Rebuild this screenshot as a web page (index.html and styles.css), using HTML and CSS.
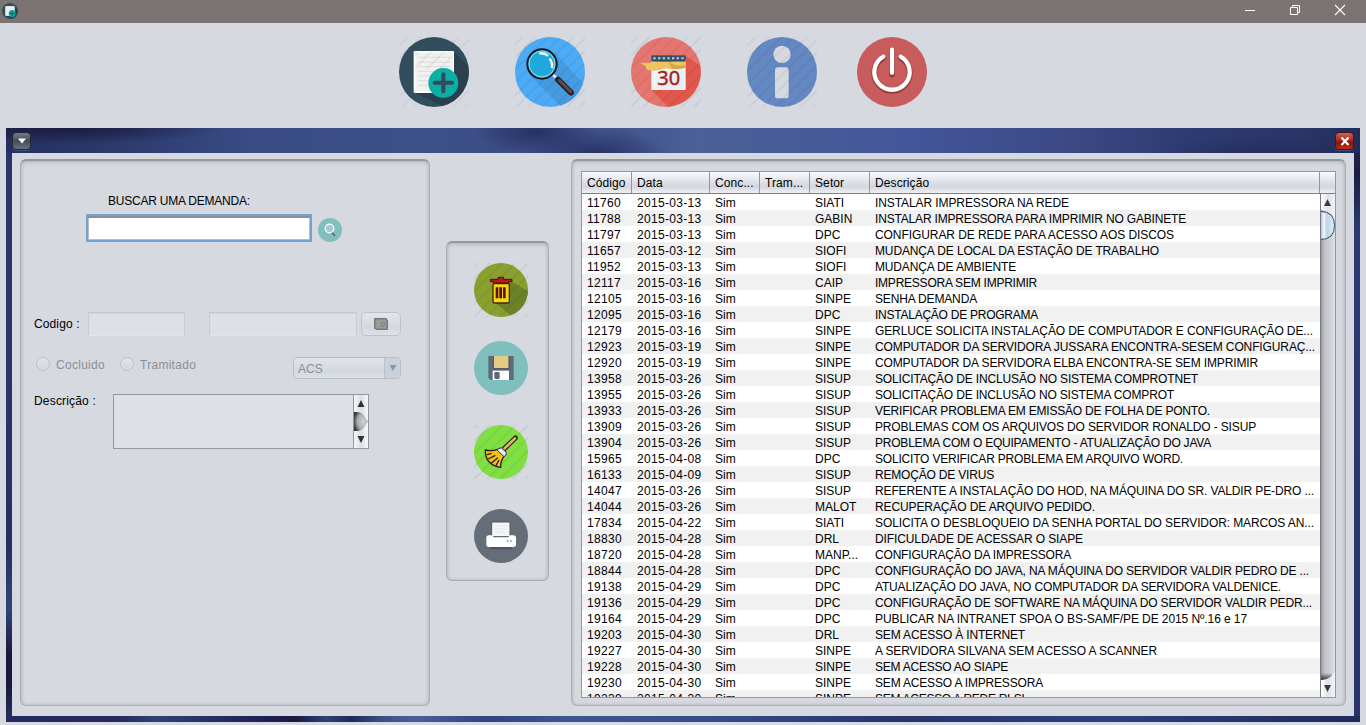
FILE: index.html
```html
<!DOCTYPE html>
<html lang="pt-BR">
<head>
<meta charset="utf-8">
<title>Demandas</title>
<link rel="stylesheet" href="styles.css">
</head>
<body>
<svg width="0" height="0" class="defs">
  <defs>
    <pattern id="stripes" width="27" height="40" patternUnits="userSpaceOnUse" patternTransform="rotate(45)">
      <rect width="6" height="40" fill="#000" opacity=".05"/>
    </pattern>
    <symbol id="newdoc" viewBox="27 27 210 210">
      <circle cx="132" cy="132" r="105" fill="#324d5c"/>
      <path d="M192 72L234 114A105 105 0 0 1 158 234L76 195Z" fill="#2b3f4e"/>
      <rect x="71" y="69" width="121" height="126" rx="4" fill="#fff"/>
      <rect x="76" y="73" width="112" height="117" fill="#f1f1f0"/>
      <path d="M85 88H180M85 102H180M85 116H180M85 130H140M85 144H120M85 158H115M85 172H118" stroke="#dcdcdc" stroke-width="3"/>
      <circle cx="160" cy="165" r="45" fill="#0aaea3"/>
      <path d="M160 139V190M134 164H186" stroke="#324a5c" stroke-width="12" stroke-linecap="round"/>
    </symbol>
  </defs>
</svg>

<header class="titlebar">
  <svg class="app-icon" width="16" height="16"><use href="#newdoc"/></svg>
  <div class="win-controls">
    <svg width="12" height="12" viewBox="0 0 12 12"><path d="M1 6.5H11" stroke="#fff"/></svg>
    <svg width="12" height="12" viewBox="0 0 12 12"><path d="M1.5 3.5H8.500V10.500H1.500ZM3.500 3.500V1.500H10.500V8.500H8.500" fill="none" stroke="#fff"/></svg>
    <svg width="12" height="12" viewBox="0 0 12 12"><path d="M1 1L11 11M11 1L1 11" stroke="#fff" stroke-width="1.100"/></svg>
  </div>
</header>

<nav class="toolbar">
  <svg width="70" height="70" viewBox="27 27 210 210">
    <rect x="27" y="27" width="210" height="210" fill="url(#stripes)" opacity=".6"/>
    <use href="#newdoc" x="27" y="27" width="210" height="210"/>
    <rect x="76" y="73" width="112" height="50" fill="url(#stripes)"/>
  </svg>
  <svg width="70" height="70" viewBox="375 27 210 210">
    <circle cx="480" cy="132" r="105" fill="#4dabf5"/>
    <path d="M495 75L579 165A105 105 0 0 1 511 233L418 141Z" fill="#459be0"/>
    <rect x="375" y="27" width="210" height="210" fill="url(#stripes)"/>
    <path d="M487 138L507 158" stroke="#e8e8e8" stroke-width="8"/>
    <path d="M504 155L543 194" stroke="#2b2224" stroke-width="18" stroke-linecap="round"/>
    <path d="M508 157L542 191" stroke="#5d4a50" stroke-width="9" stroke-linecap="round"/>
    <circle cx="456" cy="108" r="44" fill="#1fa9dc" stroke="#14191d" stroke-width="6"/>
    <circle cx="456" cy="108" r="39" fill="none" stroke="#9edcf0" stroke-width="3"/>
    <path d="M448 76Q464 74 474 84M479 92Q488 104 486 120" fill="none" stroke="#fff" stroke-width="7"/>
  </svg>
  <svg width="70" height="70" viewBox="723 27 210 210">
    <circle cx="828" cy="132" r="105" fill="#e5766f"/>
    <path d="M886 84L930 112A105 105 0 0 1 835 236L784 185Z" fill="#e1574b"/>
    <rect x="723" y="27" width="210" height="210" fill="url(#stripes)"/>
    <rect x="784" y="96" width="103" height="90" fill="#eff3f4"/>
    <path d="M800 178L880 98V184H800Z" fill="#e3eaec" opacity=".5"/>
    <path d="M751 106Q795 104 832 97Q860 108 887 98V118Q850 128 828 121Q790 134 769 124L766 114Z" fill="#edc45e"/>
    <path d="M832 97Q850 118 887 112V119Q860 126 846 121Z" fill="#d4a549"/>
    <rect x="784" y="82" width="103" height="19" fill="#345064"/>
    <path d="M790 91H884" stroke="#b8d0db" stroke-width="6" stroke-dasharray="7 7"/>
    <text x="836" y="171" text-anchor="middle" class="cal-num">30</text>
  </svg>
  <svg width="70" height="70" viewBox="141 27 210 210">
    <circle cx="246" cy="132" r="105" fill="#6488c2"/>
    <circle cx="246" cy="79" r="26" fill="#d6d9e0"/>
    <rect x="225" y="118" width="41" height="93" rx="8" fill="#d6d9e0"/>
    <rect x="141" y="27" width="210" height="210" fill="url(#stripes)" opacity=".9"/>
  </svg>
  <svg class="power" width="70" height="70" viewBox="471 27 210 210">
    <circle cx="576" cy="132" r="105" fill="#c85c5c"/>
    <g fill="none" stroke-width="13" stroke-linecap="round">
      <path d="M550 89A53 53 0 1 0 602 89M576 68V139" stroke="#8e3535" stroke-width="17"/>
      <path d="M550 86A53 53 0 1 0 602 86M576 65V134" stroke="#fff"/>
    </g>
  </svg>
</nav>

<main class="frame">
  <div class="frame-bar">
    <button class="fbtn menu"><svg width="18" height="17" viewBox="0 0 18 17"><path d="M5 5.500H13L9 10.500Z" fill="#fff"/></svg></button>
    <button class="fbtn close"><svg width="18" height="17" viewBox="0 0 18 17"><path d="M5.500 4.500L12.500 12M12.500 4.500L5.500 12" stroke="#fff" stroke-width="2.200"/></svg></button>
  </div>
  <div class="content">
    <section class="panel form">
      <label class="search-label">BUSCAR UMA DEMANDA:</label>
      <div class="search-row">
        <input class="search">
        <svg width="24" height="24" viewBox="0 0 24 24"><circle cx="12" cy="12" r="12" fill="#7fbfbe"/><path d="M13.500 14L17 18" stroke="#596b78" stroke-width="1.700"/><circle cx="11.500" cy="10.500" r="4.300" fill="#a3cbd0" stroke="#fff" stroke-width="1.300"/></svg>
      </div>
      <div class="code-row">
        <label>Codigo :</label>
        <div class="field code"></div>
        <div class="field date"></div>
        <div class="datebtn"><svg width="14" height="12" viewBox="0 0 14 12"><path d="M.5 .5H12.500V2H13.500V11.500H2V10.500H.5Z" fill="#8b8b8b" stroke="#777"/><rect x="2" y="2" width="10" height="8" fill="#9a9a9a"/><circle cx="9" cy="6.500" r="1.800" fill="none" stroke="#7c7c7c"/></svg></div>
      </div>
      <div class="opt-row">
        <span class="radio"></span><label class="done">Cocluido</label>
        <span class="radio"></span><label class="sent">Tramitado</label>
        <div class="combo"><span>ACS</span><i><svg width="8" height="8"><path d="M.5 1H7.500L4 7Z" fill="#8e949e"/></svg></i></div>
      </div>
      <div class="desc-row">
        <label>Descrição :</label>
        <div class="textarea">
          <svg width="14" height="53" viewBox="0 0 14 53">
            <defs><radialGradient id="knob" cx=".65" cy=".5" r=".7"><stop offset="0" stop-color="#d3d4d8"/><stop offset=".6" stop-color="#a6a8ac"/><stop offset="1" stop-color="#333"/></radialGradient>
            <linearGradient id="track"><stop offset="0" stop-color="#f5f7f8"/><stop offset=".5" stop-color="#dcdfe3"/><stop offset="1" stop-color="#f6f8f9"/></linearGradient></defs>
            <rect width="14" height="53" fill="url(#track)"/>
            <path d="M0 17H3Q9 17 12 24L14 26.500L12 29Q9 36 3 36H0Z" fill="url(#knob)"/>
            <path d="M7 5L10.500 12H3.500ZM7 48L10.500 41H3.500Z" fill="#333"/>
          </svg>
        </div>
      </div>
    </section>

    <aside class="panel actions">
      <svg width="54" height="54" viewBox="102 84 162 162">
        <circle cx="183" cy="165" r="81" fill="#89a02e"/>
        <path d="M212 137L264 169A81 81 0 0 1 211 241L164 201Z" fill="#6d8127"/>
        <rect x="102" y="84" width="162" height="162" fill="url(#stripes)"/>
        <rect x="159" y="146" width="49" height="58" rx="4" fill="#f9d70a" stroke="#382c0d" stroke-width="4"/>
        <path d="M171 157V190M182 157V190M193 157V190" stroke="#5a1010" stroke-width="8"/>
        <path d="M151 133H174V127H191V133H216V140H206V144H160V140H151Z" fill="#b41b1b" stroke="#4b1513" stroke-width="3"/>
      </svg>
      <svg class="disk" width="54" height="54" viewBox="102 318 162 162">
        <circle cx="183" cy="399" r="81" fill="#7fbfbe"/>
        <path d="M145 363H221V435H152L145 428Z" fill="#5d6b7c"/>
        <rect x="160" y="363" width="47" height="38" fill="#e3cc85"/>
        <path d="M160 401V363M207 363V401M160 401H207" stroke="#434c5a" stroke-width="3"/>
        <rect x="158" y="407" width="49" height="28" fill="#fff"/>
        <rect x="163" y="411" width="16" height="21" rx="4" fill="#59687a"/>
      </svg>
      <svg class="broom" width="54" height="54" viewBox="102 45 162 162">
        <circle cx="183" cy="126" r="81" fill="#80df43"/>
        <rect x="102" y="45" width="162" height="162" fill="url(#stripes)"/>
        <path d="M193 116L226 84" stroke="#262128" stroke-width="15" stroke-linecap="round"/>
        <path d="M193 116L225 85" stroke="#eeb06a" stroke-width="8" stroke-linecap="round"/>
        <path d="M172 118Q155 125 136 120Q135 165 182 172Q181 152 194 136Z" fill="#f5bf18" stroke="#292019" stroke-width="4"/>
        <path d="M141 134L155 130M145 147L166 136M154 160L173 143M168 167L177 150" stroke="#292019" stroke-width="4"/>
        <path d="M172 121Q174 112 185 114L199 127Q200 138 192 140Z" fill="#e9eef5" stroke="#302b31" stroke-width="3"/>
      </svg>
      <svg class="printer" width="54" height="54" viewBox="102 297 162 162">
        <circle cx="183" cy="378" r="81" fill="#656d78"/>
        <path d="M155 378V336H210V378" fill="#f5f6f7" stroke="#4e5761" stroke-width="3"/>
        <path d="M163 348H202M163 357H202M163 366H202" stroke="#dfe1e3" stroke-width="2"/>
        <rect x="150" y="400" width="66" height="18" rx="3" fill="#4d5662"/>
        <path d="M139 384Q139 376 147 376H157Q159 382 163 382H203Q207 382 209 376H220Q228 376 228 384V403Q228 411 221 411H146Q139 411 139 403Z" fill="#fff"/>
        <circle cx="203" cy="393" r="3" fill="#ec7d5c"/><circle cx="213" cy="393" r="3" fill="#64b5b9"/>
      </svg>
    </aside>

    <section class="panel list">
      <div class="table">
        <div class="thead"><span>Código</span><span>Data</span><span>Conc...</span><span>Tram...</span><span>Setor</span><span>Descrição</span><span></span></div>
        <div class="tbody">
          <div class="rows" id="rows"></div>
          <svg class="scroll" width="15" height="503" viewBox="0 0 15 503">
            <defs>
              <linearGradient id="trk"><stop offset="0" stop-color="#8f9095"/><stop offset=".3" stop-color="#bfc1c6"/><stop offset=".7" stop-color="#cfd1d7"/><stop offset="1" stop-color="#dfe1e6"/></linearGradient>
              <linearGradient id="thumb"><stop offset="0" stop-color="#a9bfd0"/><stop offset=".25" stop-color="#f3f8fb"/><stop offset=".45" stop-color="#bcd2e4"/><stop offset="1" stop-color="#e3f3fb"/></linearGradient>
              <linearGradient id="btn"><stop offset="0" stop-color="#fff"/><stop offset=".5" stop-color="#dfe2e6"/><stop offset="1" stop-color="#f2f4f6"/></linearGradient>
              <linearGradient id="dark" y2="1" x2="0"><stop offset="0" stop-color="#333" stop-opacity="0"/><stop offset="1" stop-color="#333"/></linearGradient>
            </defs>
            <rect width="15" height="503" fill="url(#trk)"/>
            <path d="M1 0H15V28Q12 17 2 16H1Z" fill="url(#btn)"/>
            <rect y="479" width="12" height="7" fill="url(#dark)"/>
            <path d="M1 486H2Q12 485 15 476V503H1Z" fill="url(#btn)"/>
            <path d="M7.500 5L11 12H4ZM7.500 498L11 491H4Z" fill="#3a3a3a"/>
            <path d="M.5 17.500Q14.500 17.500 14.500 31.500Q14.500 45.500 .5 45.500" fill="url(#thumb)" stroke="#354e66"/>
            <path d="M.5 0V503" stroke="#777a80"/>
          </svg>
        </div>
      </div>
    </section>
  </div>
</main>
<script src="rows.js"></script>
</body>
</html>
```
FILE: styles.css
```css
* { box-sizing: border-box; }
body { margin: 0; width: 1366px; height: 725px; overflow: hidden; background: #d6d9e0; font: 12px/16px "Liberation Sans", Arial, sans-serif; color: #000; display: flex; flex-direction: column; }
svg { display: block; flex: none; }
.defs { position: absolute; }
.titlebar { height: 23px; flex: none; background: #7c7472; display: flex; align-items: flex-start; justify-content: space-between; padding: 3px 19px 0 2px; }
.win-controls { display: flex; gap: 33px; padding: 1px 1px 0 0; }
.toolbar { height: 105px; flex: none; display: flex; gap: 46px; padding: 14px 0 0 399px; }
.toolbar .power { margin-left: -6px; }
.cal-num { font: 60px "Open Sans", sans-serif; fill: #a61c1c; stroke: #a61c1c; stroke-width: 1.5; }
.frame { width: 1354px; height: 594px; flex: none; margin-left: 6px; padding: 0 6px 6px; display: flex; flex-direction: column;
  background:
    linear-gradient(90deg, #232c5c 0, #252a5c 110px, #2f4174 150px, #20255a 240px, #191a42 290px, #2f4174 320px, #1f2a5a 345px, #3a5084 375px, #4a5f98 410px, #2f4480 480px, #3a5690 560px, #334c86 720px, #27326a 900px, #2c407c 1100px, #20295c 1354px) bottom / 100% 6px no-repeat,
    linear-gradient(#27356a 0, #27356a 250px, #24305f 420px, #30447c 480px, #1b1a3c 525px, #1a1636 550px, #25305e 594px) left / 6px 100% no-repeat,
    linear-gradient(#1c2c5c 0, #1c1b42 45px, #2b3a72 100px, #2a3870 300px, #27336a 594px) right / 6px 100% no-repeat #27356a; }
.frame-bar { height: 25px; flex: none; margin: 0 -6px; padding: 4px 6px 0; display: flex; justify-content: space-between;
  background:
    radial-gradient(ellipse 110px 20px at 1255px 27px, #20265299, transparent),
    radial-gradient(ellipse 75px 26px at 590px 26px, #232d60dd, transparent),
    radial-gradient(ellipse 60px 22px at 530px 4px, #232d60dd, transparent),
    radial-gradient(ellipse 160px 16px at 60px 0, #181639dd, transparent),
    linear-gradient(90deg, #252f60 0, #2a3869 90px, #394c86 250px, #3c5089 430px, #3b4c83 500px, #43568e 620px, #4b6098 690px, #465c97 800px, #43569a 900px, #3c4b87 1050px, #2e3b72 1180px, #2a3568 1300px, #202c5a 1354px); }
.fbtn { width: 19px; height: 18px; padding: 0; border: 1px solid #22262f; border-radius: 4px; display: flex; align-items: center; justify-content: center; box-shadow: 0 1px 1px #7684a766; }
.menu { background: linear-gradient(#767b88, #454b5b 50%, #687183); }
.close { background: linear-gradient(#c9665d, #a92116 50%, #8e1207 60%, #b8311f); border-color: #4a1018; }
.content { flex: 1; min-height: 0; background: #d6d9e0; padding: 6px 8px 10px; display: flex; }
.panel { border: 1px solid #abadb2; border-top: 2px solid #96989d; border-radius: 6px; box-shadow: inset 0 1px 4px #94969b88, inset 0 0 3px #a5a7ac66; }
.form { width: 410px; height: 547px; padding: 32px 0 0 13px; display: flex; flex-direction: column; align-items: flex-start; }
.search-label { margin-left: 74px; height: 16px; letter-spacing: -.22px; }
.search-row { display: flex; margin: 5px 0 0 52px; gap: 6px; align-items: flex-end; }
.search { width: 226px; height: 28px; border: 2px solid #73a4d1; outline: 0; box-shadow: inset 0 2px 0 #8e8f90, inset 0 0 0 1px #bbb; background: #fff; font: inherit; }
.code-row { display: flex; align-items: center; margin-top: 69px; height: 25px; }
.code-row > label { width: 54px; letter-spacing: .12px; }
.field { height: 24px; background: #dde0e4; border: 1px solid #c9ccd2; border-top-color: #c5c8ce; border-bottom-color: #e1e4e9; box-shadow: inset 0 1px 1px #d1d4da; }
.code { width: 97px; }
.date { width: 148px; margin-left: 24px; }
.datebtn { width: 40px; height: 24px; margin-left: 4px; border: 1px solid #bdc2cb; border-radius: 5px; background: linear-gradient(#e3e6eb, #d3d7df 65%, #dee1e7); display: flex; align-items: center; justify-content: center; }
.opt-row { display: flex; height: 22px; margin-top: 21px; color: #8e8f94; }
.opt-row label { letter-spacing: .28px; padding-top: 0; }
.done { width: 64px; }
.sent { width: 153px; }
.radio { width: 14px; height: 14px; border: 1px solid #bcc1ca; border-radius: 50%; background: linear-gradient(#e1e4e9, #d4d8df); margin: 0 6px 0 2px; }
.sent { margin-left: 0; }
.done + .radio { margin-left: 0; }
.combo { width: 108px; height: 22px; border: 1px solid #b9bfc9; border-radius: 4px; background: linear-gradient(#e1e4e9, #d4d8df 65%, #dcdfe5); display: flex; justify-content: space-between; line-height: 23px; padding-left: 4px; }
.combo i { width: 16px; border-left: 1px solid #b9c3d0; background: #c9d1dd; display: flex; align-items: center; justify-content: center; border-radius: 0 3px 3px 0; }
.desc-row { display: flex; margin-top: 15px; }
.desc-row label { width: 79px; letter-spacing: .18px; margin-top: -1px; }
.textarea { width: 256px; height: 55px; border: 1px solid #9297a1; background: #dde0e4; display: flex; justify-content: flex-end; }
.textarea svg { border-left: 1px solid #9297a1; width: 15px; }
.actions { width: 103px; height: 340px; margin: 82px 0 0 16px; padding: 20px 0 0 27px; }
.actions .disk { margin-top: 24px; }
.actions .broom, .actions .printer { margin-top: 30px; }
.list { width: 775px; height: 547px; margin-left: 22px; padding: 10px 0 0 9px; }
.table { width: 755px; height: 527px; border: 1px solid #9297a1; background: #fff; }
.thead { height: 22px; display: grid; grid-template-columns: 50px 78px 50px 50px 60px 450px 15px; background: linear-gradient(#fbfbfc, #dfe2e7 45%, #d3d6dd 70%, #eef0f4); border-bottom: 1px solid #7b7f88; line-height: 23px; }
.thead span { padding-left: 5px; border-right: 1px solid #92979f; white-space: nowrap; letter-spacing: .1px; height: 21px; }
.thead span:last-child { border: 0; }
.tbody { display: flex; height: 503px; }
.rows { width: 738px; height: 503px; overflow: hidden; }
.scroll { width: 15px; }
.row { display: grid; grid-template-columns: 50px 78px 50px 50px 60px 450px; height: 16px; line-height: 18px; }
.row:nth-child(even) { background: #f1f1f1; }
.row span { padding-left: 5px; white-space: nowrap; }
.num { letter-spacing: .3px; }
.row .desc { justify-self: start; padding: 0; margin-left: 5px; }
```
FILE: rows.js
```js
// codigo | data | setor | descricao | text width in px
const data = `11760|2015-03-13|SIATI|INSTALAR IMPRESSORA NA REDE|194
11788|2015-03-13|GABIN|INSTALAR IMPRESSORA PARA IMPRIMIR NO GABINETE|311
11797|2015-03-13|DPC|CONFIGURAR DE REDE PARA ACESSO AOS DISCOS|299
11657|2015-03-12|SIOFI|MUDANÇA DE LOCAL DA ESTAÇÃO DE TRABALHO|284
11952|2015-03-13|SIOFI|MUDANÇA DE AMBIENTE|141
12117|2015-03-16|CAIP|IMPRESSORA SEM IMPRIMIR|162
12105|2015-03-16|SINPE|SENHA DEMANDA|102
12095|2015-03-16|DPC|INSTALAÇÃO DE PROGRAMA|163
12179|2015-03-16|SINPE|GERLUCE SOLICITA INSTALAÇÃO DE COMPUTADOR E CONFIGURAÇÃO DE...|438
12923|2015-03-19|SINPE|COMPUTADOR DA SERVIDORA JUSSARA ENCONTRA-SESEM CONFIGURAÇ...|440
12920|2015-03-19|SINPE|COMPUTADOR DA SERVIDORA ELBA ENCONTRA-SE SEM IMPRIMIR|383
13958|2015-03-26|SISUP|SOLICITAÇÃO DE INCLUSÃO NO SISTEMA COMPROTNET|323
13955|2015-03-26|SISUP|SOLICITAÇÃO DE INCLUSÃO NO SISTEMA COMPROT|299
13933|2015-03-26|SISUP|VERIFICAR PROBLEMA EM EMISSÃO DE FOLHA DE PONTO.|335
13909|2015-03-26|SISUP|PROBLEMAS COM OS ARQUIVOS DO SERVIDOR RONALDO - SISUP|381
13904|2015-03-26|SISUP|PROBLEMA COM O EQUIPAMENTO - ATUALIZAÇÃO DO JAVA|336
15965|2015-04-08|DPC|SOLICITO VERIFICAR PROBLEMA EM ARQUIVO WORD.|308
16133|2015-04-09|SISUP|REMOÇÃO DE VIRUS|119
14047|2015-03-26|SISUP|REFERENTE A INSTALAÇÃO DO HOD, NA MÁQUINA DO SR. VALDIR PE-DRO ...|439
14044|2015-03-26|MALOT|RECUPERAÇÃO DE ARQUIVO PEDIDO.|220
17834|2015-04-22|SIATI|SOLICITA O DESBLOQUEIO DA SENHA PORTAL DO SERVIDOR: MARCOS AN...|439
18830|2015-04-28|DRL|DIFICULDADE DE ACESSAR O SIAPE|208
18720|2015-04-28|MANP...|CONFIGURAÇÃO DA IMPRESSORA|196
18844|2015-04-28|DPC|CONFIGURAÇÃO DO JAVA, NA MÁQUINA DO SERVIDOR VALDIR PEDRO DE ...|434
19138|2015-04-29|DPC|ATUALIZAÇÃO DO JAVA, NO COMPUTADOR DA SERVIDORA VALDENICE.|406
19136|2015-04-29|DPC|CONFIGURAÇÃO DE SOFTWARE NA MÁQUINA DO SERVIDOR VALDIR PEDR...|437
19164|2015-04-29|DPC|PUBLICAR NA INTRANET SPOA O BS-SAMF/PE DE 2015 Nº.16 e 17|372
19203|2015-04-30|DRL|SEM ACESSO À INTERNET|150
19227|2015-04-30|SINPE|A SERVIDORA SILVANA SEM ACESSO A SCANNER|282
19228|2015-04-30|SINPE|SEM ACESSO AO SIAPE|133
19230|2015-04-30|SINPE|SEM ACESSO A IMPRESSORA|168
19239|2015-04-30|SINPE|SEM ACESSO A REDE RI-SL|153`;

const rows = document.getElementById('rows');
for (const line of data.split('\n')) {
  const [code, date, sector, text, width] = line.split('|');
  const row = document.createElement('div');
  row.className = 'row';
  const cells = [[code, 'num'], [date, 'num'], ['Sim', ''], ['', ''], [sector, ''], [text, 'desc']];
  for (const [value, cls] of cells) {
    const cell = document.createElement('span');
    cell.textContent = value;
    cell.className = cls;
    row.appendChild(cell);
  }
  rows.appendChild(row);
  const desc = row.lastChild;
  desc.style.letterSpacing = (width - desc.getBoundingClientRect().width) / text.length + 'px';
}
```
